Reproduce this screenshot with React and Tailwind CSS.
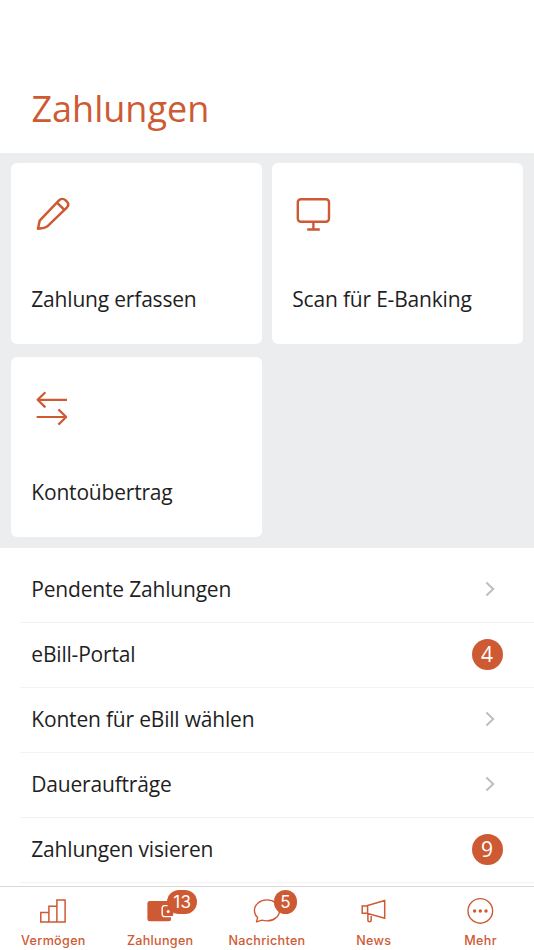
const PencilIcon = () => (
  <svg className="block h-10 w-10" viewBox="0 0 40 40" fill="none" stroke="currentColor" strokeWidth="2.5" strokeLinejoin="round">
    <path d="M7 34.7 8.7 26.6 28 6.4C29.8 4.6 32.6 4.4 34.4 6.1L35.9 7.6C37.7 9.5 37.6 11.8 35.8 13.7L16.6 32.2C15 33.7 10.5 34.5 7 34.7Z" />
    <path d="M26 8.6 33.4 15.8" />
  </svg>
)

const MonitorIcon = () => (
  <svg className="block h-10 w-10" viewBox="0 0 40 40" fill="none" stroke="currentColor" strokeWidth="2.4">
    <rect x="5.8" y="5.2" width="31.2" height="22.6" rx="3" />
    <path d="M21.4 28v7.6M15.2 35.5h12.6" />
  </svg>
)

const TransferIcon = () => (
  <svg className="block h-10 w-10" viewBox="0 0 40 40" fill="none" stroke="currentColor" strokeWidth="2.2" strokeLinejoin="round">
    <path d="M36 11.8H6.6M14.4 4.2 6.6 11.8 14.4 19.4" />
    <path d="M5.6 29h29.6M27.4 21.4 35.2 29 27.4 36.6" />
  </svg>
)

const BarsIcon = () => (
  <svg className="block h-7 w-8" viewBox="0 0 32 28" fill="none" stroke="currentColor" strokeWidth="1.5">
    <path d="M3.8 25V15.5h8.1V25M11.9 15.5V9.3h8V25M19.9 9.3V2.9h8.2V25M3 25h25.9" />
  </svg>
)

const WalletIcon = () => (
  <svg className="block h-7 w-8" viewBox="0 0 32 28">
    <path fill="currentColor" d="M5.6 3.9H25a2 2 0 0 1 2 2V22.3a2 2 0 0 1-2 2H5.8a2.4 2.4 0 0 1-2.4-2.4V6.3a2.4 2.4 0 0 1 2.4-2.4Z" />
    <path fill="currentColor" d="M20.7 9h7a1.6 1.6 0 0 1 1.6 1.6v7a1.6 1.6 0 0 1-1.6 1.6h-7a2.5 2.5 0 0 1-2.5-2.5v-5.2A2.5 2.5 0 0 1 20.7 9Z" />
    <path fill="none" stroke="#fff" strokeWidth="1.4" d="M30 8.6h-9.6a2.2 2.2 0 0 0-2.2 2.2v6.6a2.2 2.2 0 0 0 2.2 2.2H30" />
    <circle cx="24.2" cy="14.6" r="1.5" fill="#fff" />
  </svg>
)

const ChatIcon = () => (
  <svg className="block h-7 w-8" viewBox="0 0 32 28" fill="none" stroke="currentColor" strokeWidth="1.4" strokeLinejoin="round">
    <path d="M16 2.9C9 2.9 3.4 7.6 3.4 13.4c0 3 1.2 5.4 3.2 7.2L5.5 24.9l5.6-1.7c1.5.5 3.2.7 4.9.7 7 0 12.5-4.6 12.5-10.5S23 2.9 16 2.9Z" />
  </svg>
)

const MegaphoneIcon = () => (
  <svg className="block h-7 w-8" viewBox="0 0 32 28" fill="none" stroke="currentColor" strokeWidth="1.5">
    <path d="M4.2 8.9h5.4v7.4H4.2ZM9.6 8.5 26.7 3.6v17.6L9.6 16.5ZM9.9 16.6v6.7c0 2 3.3 2 3.3 0v-6" />
  </svg>
)

const MoreIcon = () => (
  <svg className="block h-7 w-8" viewBox="0 0 32 28" fill="none" stroke="currentColor" strokeWidth="1.4">
    <circle cx="15.3" cy="13.9" r="12.3" />
    <g fill="currentColor" stroke="none">
      <circle cx="9.6" cy="14" r="1.7" />
      <circle cx="15.3" cy="14" r="1.7" />
      <circle cx="21" cy="14" r="1.7" />
    </g>
  </svg>
)

const Chevron = () => (
  <svg className="mr-[7px] block h-4 w-3" viewBox="0 0 12 16" fill="none" stroke="#bebebe" strokeWidth="2">
    <path d="M2.4 1.5 9.2 8l-6.8 6.5" />
  </svg>
)

const cards = [
  { label: 'Zahlung erfassen', Icon: PencilIcon },
  { label: 'Scan für E-Banking', Icon: MonitorIcon },
  { label: 'Kontoübertrag', Icon: TransferIcon },
]

const rows = [
  { label: 'Pendente Zahlungen' },
  { label: 'eBill-Portal', count: 4 },
  { label: 'Konten für eBill wählen' },
  { label: 'Daueraufträge' },
  { label: 'Zahlungen visieren', count: 9 },
]

const tabs = [
  { label: 'Vermögen', Icon: BarsIcon },
  { label: 'Zahlungen', Icon: WalletIcon, badge: 13 },
  { label: 'Nachrichten', Icon: ChatIcon, badge: 5 },
  { label: 'News', Icon: MegaphoneIcon },
  { label: 'Mehr', Icon: MoreIcon },
]

function App() {
  return (
    <div className="flex h-[950px] w-[534px] flex-col overflow-hidden bg-white font-['Open_Sans',sans-serif] text-[#1f1f1f]">
      <header className="flex h-[153px] shrink-0 items-end px-[31.5px] pb-[19px]">
        <h1 className="text-[36px] leading-[50px] text-[#ce5a34]">Zahlungen</h1>
      </header>

      {/* Quick actions */}
      <section className="grid h-[395px] shrink-0 grid-cols-2 grid-rows-[181px_180px] gap-x-2.5 gap-y-[13px] bg-[#ecedef] px-[11px] pt-2.5">
        {cards.map(({ label, Icon }) => (
          <button key={label} className="flex flex-col justify-between rounded-md bg-white px-5 pt-[31px] pb-[30px] text-left">
            <span className="text-[#ce5a34]"><Icon /></span>
            <span className="pl-[0.3px] text-[21px] leading-[30px] tracking-[-0.19px] whitespace-nowrap">{label}</span>
          </button>
        ))}
      </section>

      <ul className="h-[338px] shrink-0 overflow-hidden pt-2.5 pl-5">
        {rows.map(({ label, count }) => (
          <li key={label} className="flex h-[65px] items-center justify-between border-b border-[#f3f3f3] pr-[31px] pb-0.5 pl-[11px]">
            <span className="pl-[0.3px] text-[21px] leading-[30px] tracking-[-0.19px]">{label}</span>
            {count ? (
              <span className="flex h-[31px] w-[31px] items-center justify-center rounded-full bg-[#ce5a34] pr-px text-[21px] leading-none text-white">
                {count}
              </span>
            ) : (
              <Chevron />
            )}
          </li>
        ))}
      </ul>

      <nav className="grid h-16 shrink-0 grid-cols-5 border-t border-[#d8d8d6] font-[Inter,sans-serif] text-[#ce5a34]">
        {tabs.map(({ label, Icon, badge }) => (
          <button key={label} className="flex flex-col items-center pt-2.5">
            <span className="relative">
              <Icon />
              {badge && (
                <span className="absolute -top-[7px] left-[23px] flex h-[23.5px] min-w-[23.5px] items-center justify-center rounded-full bg-[#ce5a34] px-1.5 pt-px text-[17px] leading-none tracking-[0.4px] text-white">
                  {badge}
                </span>
              )}
            </span>
            <span className="mt-2 text-[12.6px] leading-4 font-medium tracking-[0.3px]">{label}</span>
          </button>
        ))}
      </nav>
    </div>
  )
}

export default App
